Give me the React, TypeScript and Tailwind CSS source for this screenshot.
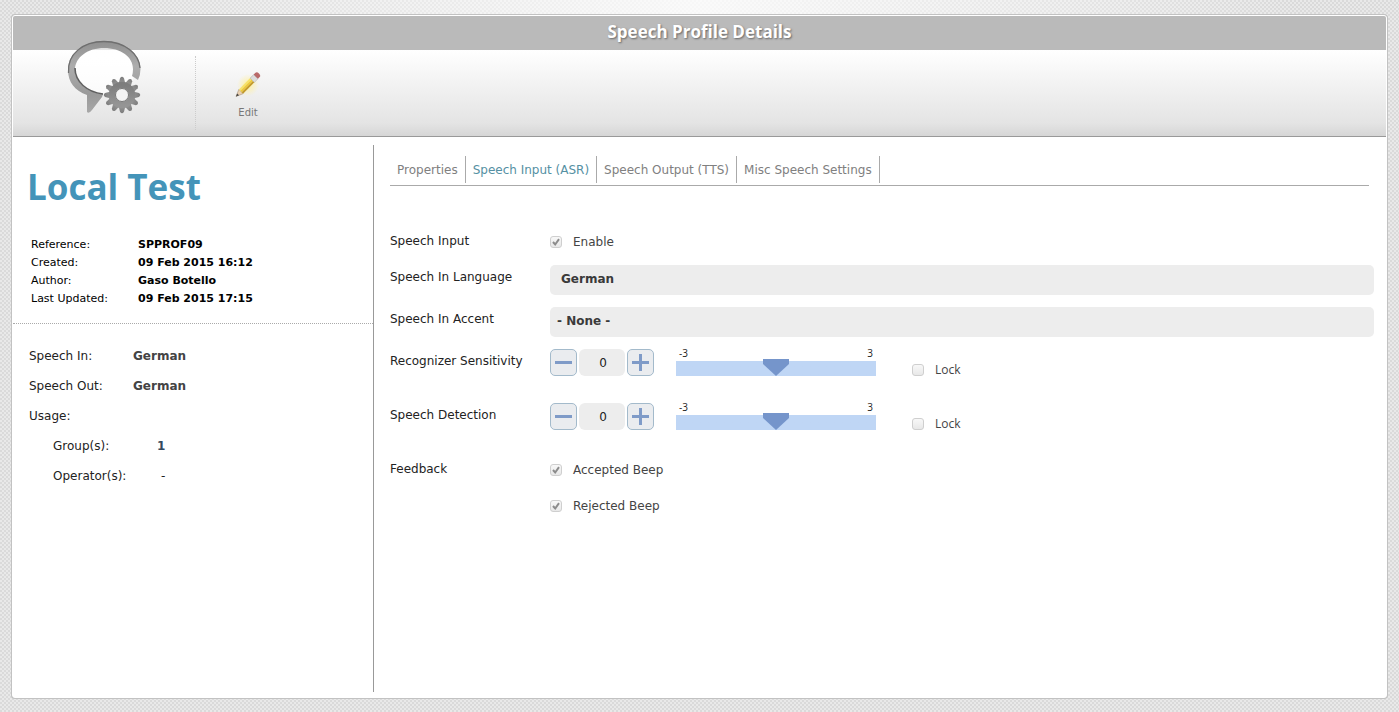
import { useState } from "react";
import type { ReactNode } from "react";

const tabs = ["Properties", "Speech Input (ASR)", "Speech Output (TTS)", "Misc Speech Settings"];

const details = [
  ["Reference:", "SPPROF09"],
  ["Created:", "09 Feb 2015 16:12"],
  ["Author:", "Gaso Botello"],
  ["Last Updated:", "09 Feb 2015 17:15"],
];

const dots =
  "bg-[#e9e9e9] bg-[radial-gradient(ellipse_at_top,#ffffffcc,transparent_60%),repeating-conic-gradient(#dadada_0_25%,transparent_0_50%)] bg-[length:100%_100%,4px_4px]";

function ProfileLogo() {
  return (
    <svg viewBox="0 0 76 76" className="h-[76px] w-[76px]" aria-hidden="true">
      <defs>
        <linearGradient id="metal" x1="0" y1="0" x2="0" y2="1">
          <stop offset="0" stopColor="#8f8f8f" />
          <stop offset="0.35" stopColor="#adadad" />
          <stop offset="0.75" stopColor="#999" />
          <stop offset="1" stopColor="#a8a8a8" />
        </linearGradient>
        <linearGradient id="bubble" x1="0" y1="0" x2="0" y2="1">
          <stop offset="0" stopColor="#fff" stopOpacity="0.3" />
          <stop offset="0.2" stopColor="#fff" />
          <stop offset="1" stopColor="#fff" stopOpacity="0.7" />
        </linearGradient>
        <linearGradient id="gear" x1="0" y1="0" x2="0" y2="1">
          <stop offset="0" stopColor="#7d7d7d" />
          <stop offset="1" stopColor="#959595" />
        </linearGradient>
      </defs>
      <ellipse cx="38" cy="31" rx="31" ry="25" fill="url(#bubble)" />
      <path
        d="M37 55C20 53 9 43 9 31C9 18 22 9 38 9C55 9 67 18 67 30Q67 34 66 37L72 41Q74.500 36 74.500 30C74.500 14 58 2 38 2C18 2 2 14 2 31C2 43 9 52 21 56V73Q23 75 26 71L36 58Z"
        fill="url(#metal)"
      />
      <path d="M2.500 34C1 15 17 2.500 38 2.500C59 2.500 73 15 74 29" fill="none" stroke="#6f6f6f" strokeWidth="1.300" />
      <path d="M9 29C9 43 21 53 37 55" fill="none" stroke="#5f5f5f" strokeWidth="1.600" />
      <g transform="translate(56 56)">
        <g fill="url(#gear)">
          {[0, 30, 60, 90, 120, 150, 180, 210, 240, 270, 300, 330].map((a) => (
            <path key={a} d="M-3.500 -11L-1.900 -17Q0 -19.500 1.900 -17L3.500 -11Z" transform={`rotate(${a})`} />
          ))}
        </g>
        <circle r="10" fill="none" stroke="url(#gear)" strokeWidth="6.500" />
        <circle r="6.500" fill="#f3f3f3" stroke="#747474" />
      </g>
    </svg>
  );
}

function PencilIcon() {
  return (
    <svg viewBox="0 0 28 28" className="h-7 w-7" aria-hidden="true">
      <defs>
        <radialGradient id="glow">
          <stop offset="0.3" stopColor="#fff0a0" stopOpacity="0.7" />
          <stop offset="1" stopColor="#fff0a0" stopOpacity="0" />
        </radialGradient>
      </defs>
      <circle cx="14" cy="14" r="11" fill="url(#glow)" />
      <g transform="translate(2 25.500) rotate(-45)">
        <path d="M0 0L7 -3V3Z" fill="#ead0b0" stroke="#a08b70" strokeWidth="0.5" />
        <path d="M0 0L3 -1.400V1.400Z" fill="#444" />
        <path d="M7 -3H23V-1H7Z" fill="#f7e26a" />
        <path d="M7 -1H23V1H7Z" fill="#edc93c" />
        <path d="M7 1H23V3H7Z" fill="#c39a2b" />
        <path d="M23 -3H28V3H23Z" fill="#dcdcdc" stroke="#aaa" strokeWidth="0.5" />
        <path d="M28 -3H30.500Q32.500 -3 32.500 0Q32.500 3 30.500 3H28Z" fill="#b96a6a" />
      </g>
    </svg>
  );
}

function Check({ id, label, initial = false }: { id: string; label: string; initial?: boolean }) {
  const [on, setOn] = useState(initial);
  return (
    <div className="flex items-center gap-[11px] text-[#444]">
      <span className="grid h-3 w-3">
        <input
          id={id}
          type="checkbox"
          checked={on}
          onChange={() => setOn(!on)}
          className="col-start-1 row-start-1 h-3 w-3 appearance-none rounded-[3px] border border-[#cfcfcf] bg-linear-to-b from-[#f8f8f8] to-[#e8e8e8]"
        />
        {on && (
          <svg viewBox="0 0 12 12" className="pointer-events-none col-start-1 row-start-1 h-3 w-3" aria-hidden="true">
            <path d="M3 6L5.200 8.500L9 3.200" fill="none" stroke="#8c8c8c" strokeWidth="2" />
          </svg>
        )}
      </span>
      <label htmlFor={id}>{label}</label>
    </div>
  );
}

function Row({ label, height, children }: { label: string; height: string; children: ReactNode }) {
  return (
    <div className={`flex items-start ${height}`}>
      <div className="w-40 shrink-0 pt-1 leading-4">{label}</div>
      <div className="min-w-0 flex-1">{children}</div>
    </div>
  );
}

const stepButton =
  "flex h-[27px] w-[27px] items-center justify-center rounded-[5px] border border-[#a3bacb] bg-[#eaecef]";

function Level({ name }: { name: string }) {
  const [value, setValue] = useState(0);
  const step = (by: number) => setValue(Math.max(-3, Math.min(3, value + by)));
  return (
    <div className="flex items-start">
      <div className="flex">
        <button type="button" aria-label={`Decrease ${name}`} onClick={() => step(-1)} className={stepButton}>
          <svg viewBox="0 0 17 17" className="h-[17px] w-[17px] shrink-0" aria-hidden="true">
            <path d="M0 8.500H17" stroke="#7f9bc8" strokeWidth="3" />
          </svg>
        </button>
        <output className="mx-0.5 flex h-[27px] w-[46px] items-center justify-center rounded-md bg-[#ededed] pl-0.5">{value}</output>
        <button type="button" aria-label={`Increase ${name}`} onClick={() => step(1)} className={stepButton}>
          <svg viewBox="0 0 17 17" className="h-[17px] w-[17px] shrink-0" aria-hidden="true">
            <path d="M0 8.500H17M8.500 0V17" stroke="#7f9bc8" strokeWidth="3" />
          </svg>
        </button>
      </div>
      <div className="ml-[22px] w-[200px]">
        <div className="flex justify-between px-[3px] pb-0.5 font-['Open_Sans',sans-serif] text-[10px] leading-[8px]">
          <span>-3</span>
          <span>3</span>
        </div>
        <input
          type="range"
          min={-3}
          max={3}
          value={value}
          aria-label={name}
          onChange={(e) => setValue(Number(e.target.value))}
          className="block h-[17px] w-full appearance-none bg-linear-to-b from-transparent from-[2px] to-[#bfd6f5] to-[2px] [&::-webkit-slider-thumb]:h-[17px] [&::-webkit-slider-thumb]:w-[26px] [&::-webkit-slider-thumb]:appearance-none [&::-webkit-slider-thumb]:bg-[#7595cb] [&::-webkit-slider-thumb]:[clip-path:polygon(0_0,100%_0,100%_30%,50%_100%,0_30%)]"
        />
      </div>
      <div className="ml-9 pt-[11px] font-['Open_Sans',sans-serif] leading-5">
        <Check id={`lock-${name}`} label="Lock" />
      </div>
    </div>
  );
}

export default function App() {
  const [active, setActive] = useState(1);
  return (
    <div className={`flex min-h-screen flex-col px-3 pt-[15px] pb-[14px] font-['DejaVu_Sans',Verdana,sans-serif] text-[12px] text-[#222] ${dots}`}>
      <div className="flex flex-1 flex-col overflow-hidden rounded-[3px] border border-white bg-white shadow-[0_0_0_1px_#c2c2c2]">
        <header>
          <h1 className="bg-[#bababa] pb-0.5 text-center font-['Open_Sans',sans-serif] text-[17px] leading-[32px] font-bold text-white [text-shadow:1px_1px_2px_#666]">
            Speech Profile Details
          </h1>
          <div className="flex h-[87px] border-b border-[#999] bg-linear-to-b from-white via-[#e4e4e4] via-85% to-[#d6d6d6]">
            <div className="-mt-[11px] w-[182px] pl-[53px]">
              <ProfileLogo />
            </div>
            <div className="my-1.5 border-l border-dotted border-[#ccc]" />
            <div className="pt-[21px] pl-[38px]">
              <button type="button" className="flex flex-col items-center gap-1.5 text-[10px] leading-4 text-[#777]">
                <PencilIcon />
                Edit
              </button>
            </div>
          </div>
        </header>
        <main className="flex flex-1 pt-2 pb-[5px]">
          <aside className="w-[361px] shrink-0 border-r border-[#999]">
            <h2 className="px-[14px] pt-[18px] font-['Open_Sans',sans-serif] text-[35px] leading-[48px] font-bold text-[#4494b9]">
              Local Test
            </h2>
            <dl className="grid grid-cols-[107px_1fr] border-b border-dotted border-[#aaa] px-[18px] pt-[25px] pb-[15px] text-[11px] leading-[18px] text-black">
              {details.map(([term, value]) => (
                <div key={term} className="contents">
                  <dt>{term}</dt>
                  <dd className="font-bold">{value}</dd>
                </div>
              ))}
            </dl>
            <dl className="grid grid-cols-[104px_1fr] px-4 pt-[17px] leading-[30px]">
              <dt>Speech In:</dt>
              <dd className="font-bold text-[#444]">German</dd>
              <dt>Speech Out:</dt>
              <dd className="font-bold text-[#444]">German</dd>
              <dt className="col-span-2">Usage:</dt>
              <dt className="pl-6">Group(s):</dt>
              <dd className="pl-6 font-bold text-[#34495e]">1</dd>
              <dt className="pl-6">Operator(s):</dt>
              <dd className="pl-7">-</dd>
            </dl>
          </aside>
          <section className="min-w-0 flex-1 pt-[11px] pr-3 pl-4">
            <nav className="mr-[5px] flex border-b border-[#aaa] pb-0.5">
              {tabs.map((tab, i) => (
                <button
                  key={tab}
                  type="button"
                  onClick={() => setActive(i)}
                  className={`border-r border-[#aaa] px-[7px] pt-0.5 leading-[25px] ${i === active ? "text-[#5590a3]" : "text-[#808080]"}`}
                >
                  {tab}
                </button>
              ))}
            </nav>
            <div className="pt-[43px]">
              <Row label="Speech Input" height="h-9">
                <div className="pt-1"><Check id="enable" label="Enable" initial /></div>
              </Row>
              <Row label="Speech In Language" height="h-[42px]">
                <div className="h-[30px] rounded-[5px] bg-[#ededed] px-[11px] leading-[28px] font-bold text-[#3a3a3a]">German</div>
              </Row>
              <Row label="Speech In Accent" height="h-[42px]">
                <div className="h-[30px] rounded-[5px] bg-[#ededed] px-[7px] leading-[28px] font-bold text-[#3a3a3a]">- None -</div>
              </Row>
              <Row label="Recognizer Sensitivity" height="h-[54px]">
                <Level name="Recognizer Sensitivity" />
              </Row>
              <Row label="Speech Detection" height="h-[54px]">
                <Level name="Speech Detection" />
              </Row>
              <Row label="Feedback" height="h-20">
                <div className="flex flex-col gap-[18px] pt-1">
                  <Check id="accepted" label="Accepted Beep" initial />
                  <Check id="rejected" label="Rejected Beep" initial />
                </div>
              </Row>
            </div>
          </section>
        </main>
      </div>
    </div>
  );
}
